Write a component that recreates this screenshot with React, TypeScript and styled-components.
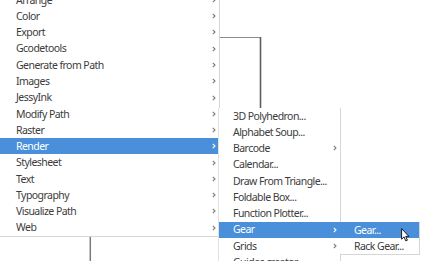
import React from "react";
import styled, { createGlobalStyle, css } from "styled-components";

const Global = createGlobalStyle`
  html, body { margin: 0; padding: 0; background: #ffffff; }
  body { font-family: "Noto Sans", "DejaVu Sans", sans-serif; }
`;

const ROW = 16.28;

const Stage = styled.div`
  position: relative;
  width: 430px;
  height: 261px;
  overflow: hidden;
  background: #ffffff;
`;

const Canvas = styled.svg`
  position: absolute;
  left: 0;
  top: 0;
  width: 430px;
  height: 261px;
`;

const Menu = styled.div`
  position: absolute;
  display: flex;
  flex-direction: column;
  background: #ffffff;
  box-sizing: border-box;
`;

const MainMenu = styled(Menu)`
  left: 0;
  top: -8.2px;
  width: 220px;
  border-right: 1px solid #d6d6d6;
  border-bottom: 1px solid #d6d6d6;
`;

const RenderMenu = styled(Menu)`
  left: 218px;
  top: 107.7px;
  width: 123px;
  border-left: 1px solid #e2e2e2;
  border-right: 1px solid #d6d6d6;
`;

const GearMenu = styled(Menu)`
  left: 340px;
  top: 221.7px;
  width: 80px;
  border-right: 1px solid #d6d6d6;
  border-bottom: 1px solid #d6d6d6;
`;

const Item = styled.div<{ $active?: boolean; $pad: number; $arrowPad: number }>`
  display: flex;
  align-items: center;
  justify-content: space-between;
  height: ${ROW}px;
  flex: none;
  box-sizing: border-box;
  padding-left: ${(p) => p.$pad}px;
  padding-right: ${(p) => p.$arrowPad}px;
  font-size: 10.5px;
  letter-spacing: -0.55px;
  color: #3c3c3c;
  white-space: nowrap;
  ${(p) =>
    p.$active &&
    css`
      background: #4a8fd9;
      color: #ffffff;
    `}
`;

const Label = styled.span`
  line-height: 1;
`;

const Chevron = styled.svg<{ $active?: boolean }>`
  width: 4px;
  height: 6px;
  flex: none;
  stroke: ${(p) => (p.$active ? "#ffffff" : "#7a7a7a")};
`;

const Cursor = styled.svg`
  position: absolute;
  left: 401px;
  top: 228px;
  width: 9px;
  height: 14px;
`;

const Arrow = ({ active }: { active?: boolean }) => (
  <Chevron $active={active} viewBox="0 0 4 6">
    <path d="M0.8 0.8 L3 3 L0.8 5.2" fill="none" strokeWidth="1.1" />
  </Chevron>
);

const mainItems = [
  "Arrange",
  "Color",
  "Export",
  "Gcodetools",
  "Generate from Path",
  "Images",
  "JessyInk",
  "Modify Path",
  "Raster",
  "Render",
  "Stylesheet",
  "Text",
  "Typography",
  "Visualize Path",
  "Web",
];

const renderItems: { label: string; sub?: boolean }[] = [
  { label: "3D Polyhedron..." },
  { label: "Alphabet Soup..." },
  { label: "Barcode", sub: true },
  { label: "Calendar..." },
  { label: "Draw From Triangle..." },
  { label: "Foldable Box..." },
  { label: "Function Plotter..." },
  { label: "Gear", sub: true },
  { label: "Grids", sub: true },
  { label: "Guides creator..." },
  { label: "Hershey Text..." },
];

const gearItems = ["Gear...", "Rack Gear..."];

export default function App() {
  return (
    <>
      <Global />
      <Stage>
        <Canvas viewBox="0 0 430 261">
          <line x1="219" y1="37.5" x2="261" y2="37.5" stroke="#8c8c8c" strokeWidth="1" />
          <line x1="260.5" y1="37" x2="260.5" y2="109" stroke="#5e5e5e" strokeWidth="1.6" />
          <line x1="90.3" y1="236" x2="90.3" y2="261" stroke="#7a7a7a" strokeWidth="1.5" />
        </Canvas>

        <MainMenu>
          {mainItems.map((t) => (
            <Item key={t} $pad={16} $arrowPad={3} $active={t === "Render"}>
              <Label>{t}</Label>
              <Arrow active={t === "Render"} />
            </Item>
          ))}
        </MainMenu>

        <RenderMenu>
          {renderItems.map((it) => (
            <Item key={it.label} $pad={14} $arrowPad={3} $active={it.label === "Gear"}>
              <Label>{it.label}</Label>
              {it.sub && <Arrow active={it.label === "Gear"} />}
            </Item>
          ))}
        </RenderMenu>

        <GearMenu>
          {gearItems.map((t, i) => (
            <Item key={t} $pad={14} $arrowPad={3} $active={i === 0}>
              <Label>{t}</Label>
            </Item>
          ))}
        </GearMenu>

        <Cursor viewBox="0 0 9 14">
          <path
            d="M0.6 0.6 L0.6 11.2 L3 8.9 L4.8 12.9 L6.4 12.2 L4.7 8.4 L7.9 8.4 Z"
            fill="#ffffff"
            stroke="#1a1a1a"
            strokeWidth="1"
            strokeLinejoin="round"
          />
        </Cursor>
      </Stage>
    </>
  );
}
